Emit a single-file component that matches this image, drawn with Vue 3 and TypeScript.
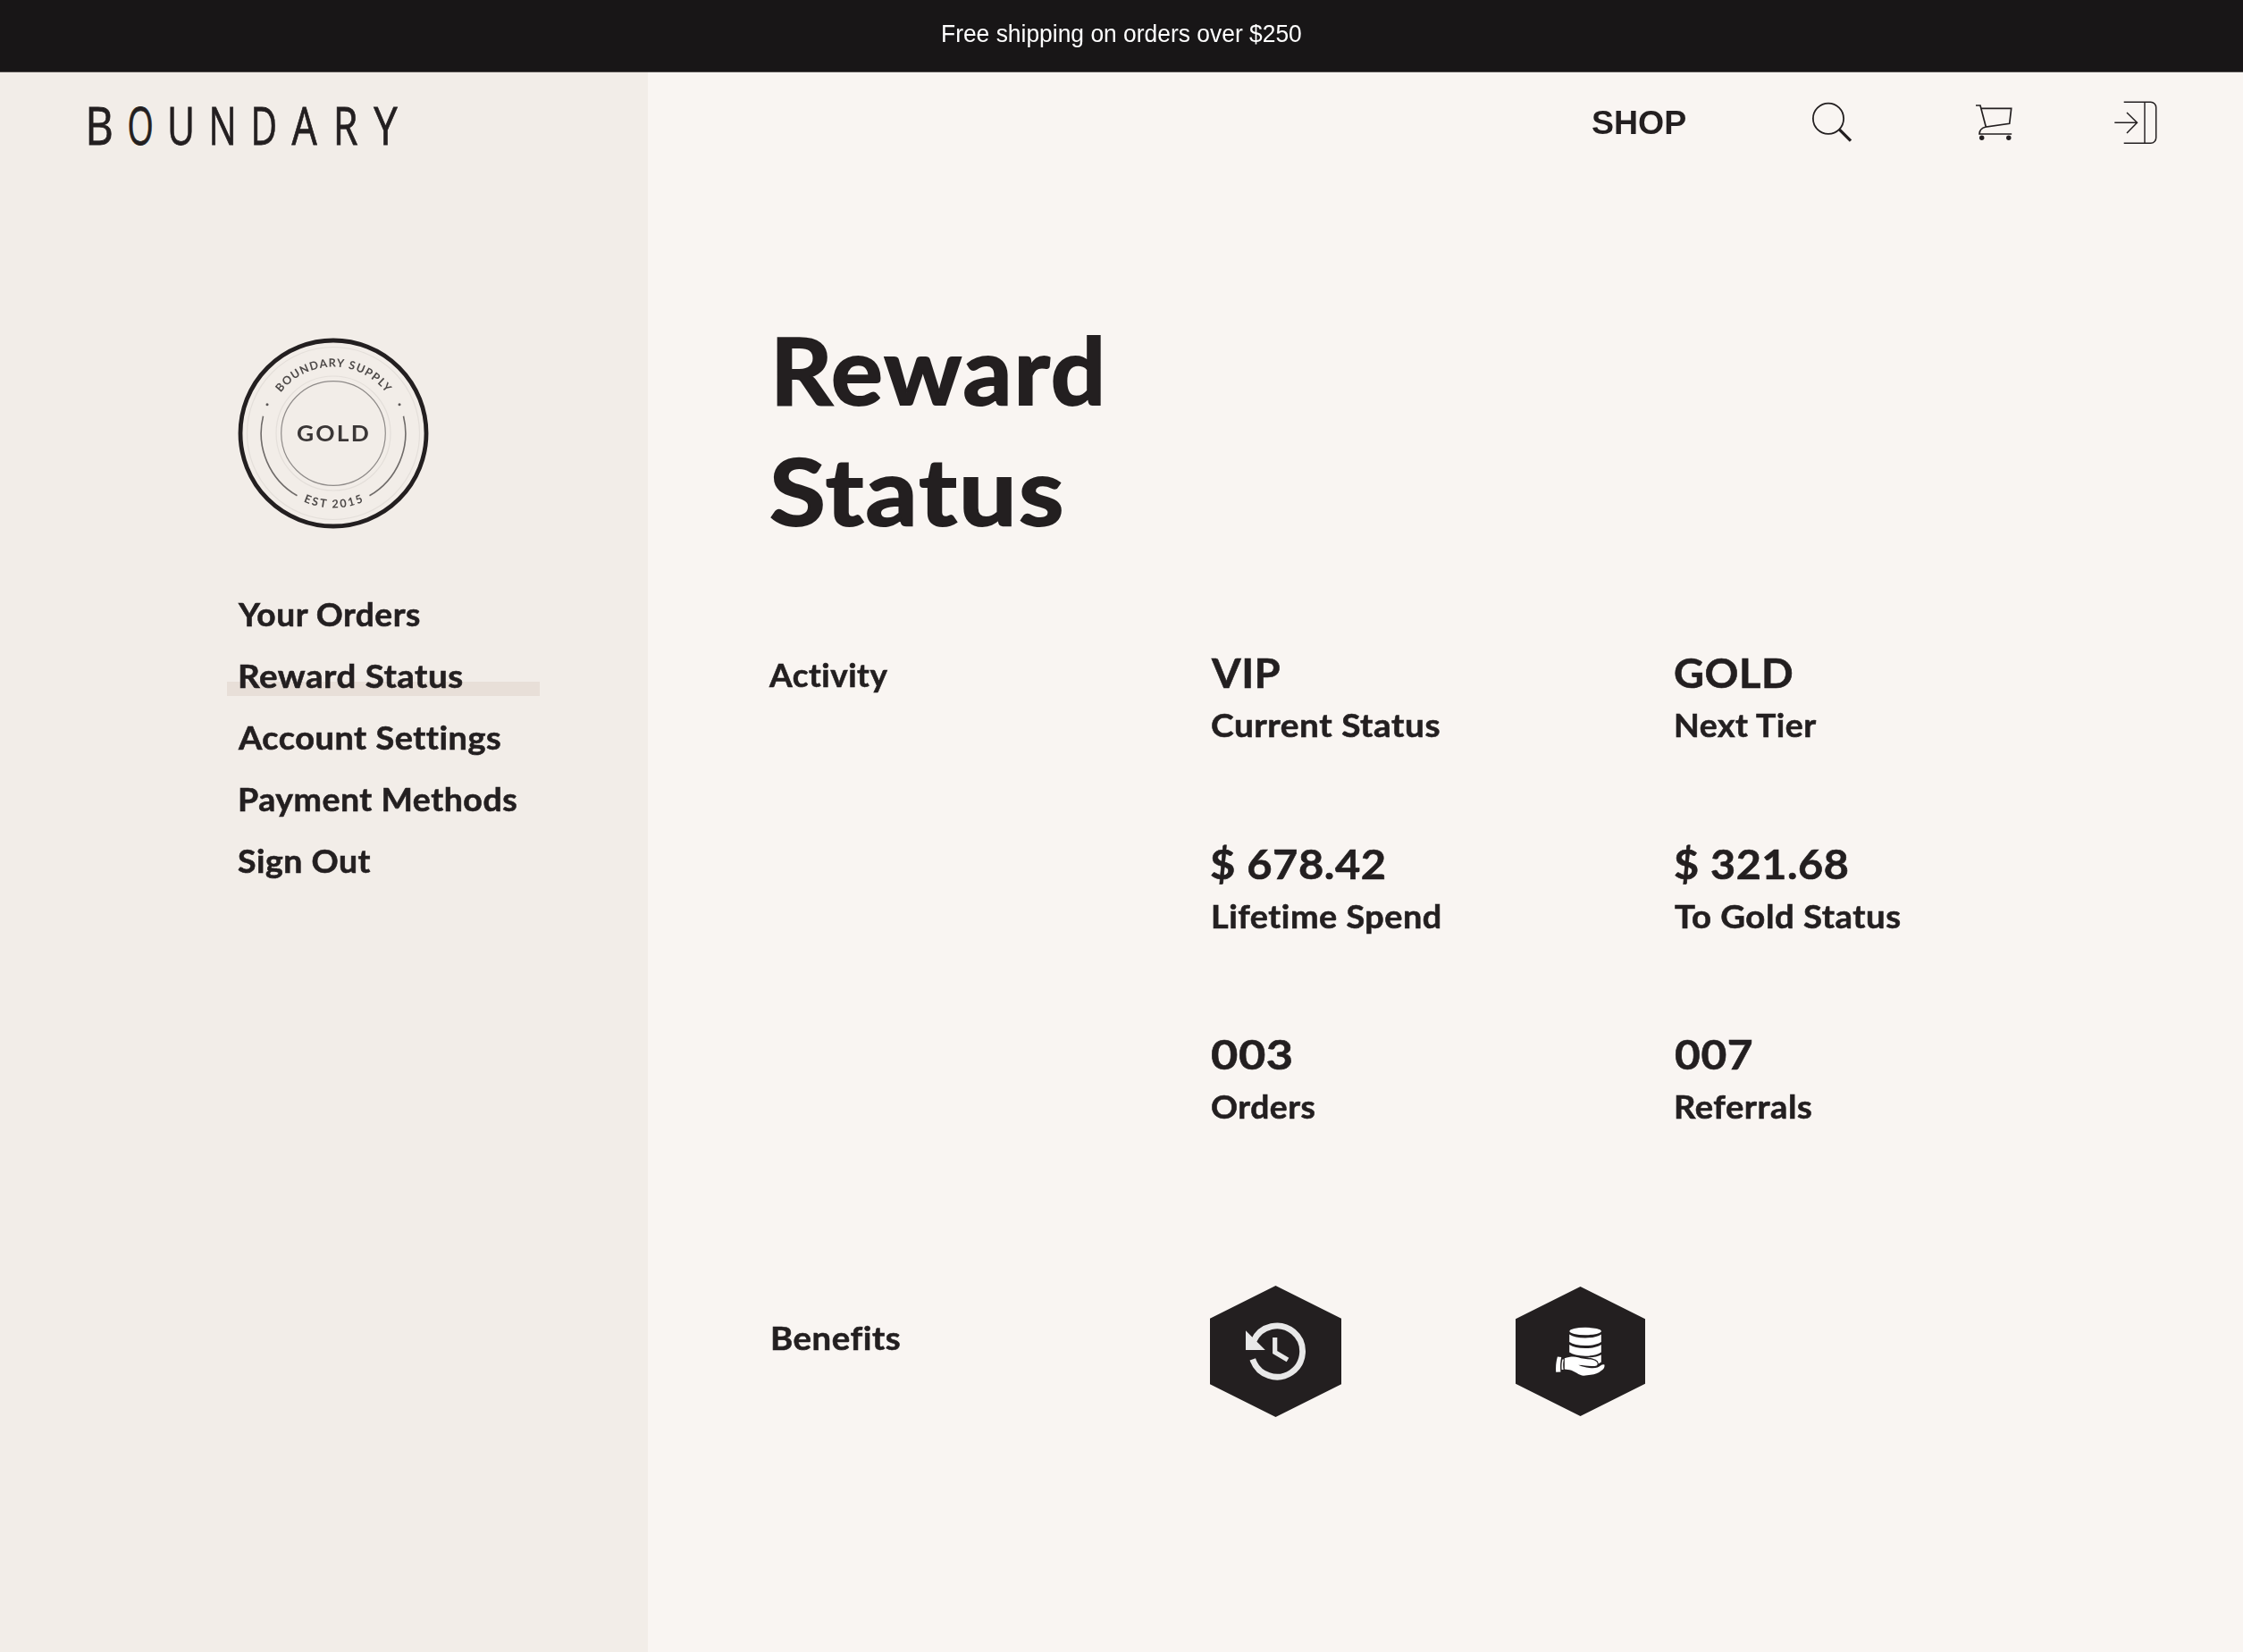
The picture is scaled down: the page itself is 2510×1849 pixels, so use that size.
<script setup lang="ts">
import type { Directive } from 'vue'

interface Label {
  text: string
  /** distance from the column edge to the first glyph's ink */
  x: number
  /** ink width of the whole line */
  w: number
}
interface Stat {
  value: Label
  label: Label
}

/** Ink extents of a text in the element's own font, taken large for precision. */
function measure(el: HTMLElement, text: string): { left: number; ink: number } | null {
  const ctx = document.createElement('canvas').getContext('2d')
  if (!ctx) return null
  const cs = getComputedStyle(el)
  const zoom = 8
  const spacing = parseFloat(cs.letterSpacing) || 0
  ctx.font = `${cs.fontWeight} ${parseFloat(cs.fontSize) * zoom}px ${cs.fontFamily}`
  ctx.letterSpacing = `${spacing * zoom}px`
  const m = ctx.measureText(text)
  return {
    left: m.actualBoundingBoxLeft / zoom,
    ink: (m.actualBoundingBoxLeft + m.actualBoundingBoxRight) / zoom,
  }
}

/** Extends a line of text so that its ink starts at x and is w pixels wide. */
const vTrack: Directive<HTMLElement, Label> = {
  mounted(el, { value }) {
    const m = measure(el, value.text)
    if (!m) return
    const k = value.w / m.ink
    el.style.marginLeft = `${value.x + m.left * k}px`
    el.style.transform = `scaleX(${k})`
  },
}

const banner: Label = { text: 'Free shipping on orders over $250', x: 1055, w: 400.7 }
const shop: Label = { text: 'SHOP', x: 0, w: 104.7 }

const menu: (Label & { active?: boolean })[] = [
  { text: 'Your Orders', x: 12.9, w: 204 },
  { text: 'Reward Status', x: 15.4, w: 248.4, active: true },
  { text: 'Account Settings', x: 12.9, w: 293.6 },
  { text: 'Payment Methods', x: 15.4, w: 309.1 },
  { text: 'Sign Out', x: 12.9, w: 148 },
]

const title: Label[] = [
  { text: 'Reward', x: 10, w: 361 },
  { text: 'Status', x: 2.6, w: 325.6 },
]

const activity: Label = { text: 'Activity', x: 0, w: 132.6 }
const benefits: Label = { text: 'Benefits', x: 5.2, w: 142 }

const stats: Stat[] = [
  { value: { text: 'VIP', x: 0.3, w: 77 }, label: { text: 'Current Status', x: 0.7, w: 254.6 } },
  { value: { text: 'GOLD', x: 0.3, w: 131 }, label: { text: 'Next Tier', x: 2.4, w: 157.4 } },
  { value: { text: '$ 678.42', x: 0.7, w: 194 }, label: { text: 'Lifetime Spend', x: 2.7, w: 253.3 } },
  { value: { text: '$ 321.68', x: 0.5, w: 192.8 }, label: { text: 'To Gold Status', x: 0, w: 252.3 } },
  { value: { text: '003', x: 0.8, w: 89.6 }, label: { text: 'Orders', x: 0.7, w: 115 } },
  { value: { text: '007', x: 0.7, w: 85.2 }, label: { text: 'Referrals', x: 2.2, w: 151 } },
]

interface LogoLetter {
  c: string
  x: number
  w: number
}
const logoLetters: LogoLetter[] = [
  { c: 'B', x: 99.8, w: 24.5 },
  { c: 'O', x: 144.3, w: 25.3 },
  { c: 'U', x: 190.4, w: 24 },
  { c: 'N', x: 237.3, w: 23.4 },
  { c: 'D', x: 284.3, w: 23.6 },
  { c: 'A', x: 326.5, w: 28.6 },
  { c: 'R', x: 377, w: 23.2 },
  { c: 'Y', x: 418.2, w: 26.6 },
]

/** Condenses a logo letter horizontally to its own ink width. */
const vCondense: Directive<HTMLElement, LogoLetter> = {
  mounted(el, { value }) {
    const m = measure(el, value.c)
    if (!m) return
    const k = value.w / m.ink
    el.setAttribute('transform', `translate(${value.x + m.left * k} 68.5) scale(${k} 1)`)
  },
}
</script>

<template>
  <div class="page">
    <div class="banner"><span v-track="banner" class="banner-text">{{ banner.text }}</span></div>

    <div class="body">
      <aside class="sidebar">
        <svg class="logo" width="460" height="94" role="img" aria-label="Boundary">
          <text v-for="l in logoLetters" :key="l.c" v-condense="l">{{ l.c }}</text>
        </svg>

        <svg class="badge" width="216" height="216" viewBox="-108 -108 216 216">
          <defs>
            <path id="arc-top" d="M-74.5 0A74.5 74.5 0 0 1 74.5 0" />
            <path id="arc-bottom" d="M-83.5 0A83.5 83.5 0 0 0 83.5 0" />
          </defs>
          <circle r="104" class="ring" />
          <circle r="96.5" class="faint" />
          <circle r="64" class="faint" />
          <circle r="58.3" class="inner" />
          <path class="side" d="M-78.5 -19.3A80.8 80.8 0 0 0 -40.5 69.8M78.5 -19.3A80.8 80.8 0 0 1 40.5 69.8" />
          <circle cx="-74" cy="-32.3" r="1.5" class="dot" />
          <circle cx="74" cy="-32.3" r="1.5" class="dot" />
          <text class="small"><textPath href="#arc-top" startOffset="50%" text-anchor="middle" textLength="136">BOUNDARY SUPPLY</textPath></text>
          <text class="small"><textPath href="#arc-bottom" startOffset="50%" text-anchor="middle" textLength="69">EST 2015</textPath></text>
          <text class="gold" x="-41" y="8.6" textLength="83" lengthAdjust="spacingAndGlyphs">GOLD</text>
        </svg>

        <nav class="menu">
          <a v-for="m in menu" :key="m.text" :class="{ active: m.active }">
            <span v-track="m">{{ m.text }}</span>
          </a>
        </nav>
      </aside>

      <main class="main">
        <header class="top">
          <a v-track="shop" class="shop">{{ shop.text }}</a>
          <svg class="search" width="46" height="46">
            <circle cx="19" cy="18.7" r="17.1" stroke-width="1.8" />
            <path d="M31 30.6L44 43.6" stroke-width="3.4" />
          </svg>
          <svg class="cart" width="44" height="44">
            <path d="M1 3H6L12.3 27L38.7 23.3L40.7 6.3H7M12.3 27C8 28 5 31 5 35H41.2" stroke-width="1.7" />
            <circle cx="7.7" cy="39.3" r="2.7" class="wheel" />
            <circle cx="37.8" cy="39.3" r="2.7" class="wheel" />
          </svg>
          <svg class="login" width="50" height="50">
            <path d="M11.7 2.3H41.7A6 6 0 0 1 47.7 8.3V42.3A6 6 0 0 1 41.7 48.3H11.7" stroke-width="1.5" />
            <path d="M35 2.3V48.3" stroke-width="1.7" stroke-opacity="0.85" />
            <path d="M1.3 25.3H26.5M15 14L26.5 25.3L15 37" stroke-width="1.5" />
          </svg>
        </header>

        <h1 class="title">
          <span v-for="t in title" :key="t.text" v-track="t">{{ t.text }}</span>
        </h1>

        <section class="row activity">
          <h2 class="row-label"><span v-track="activity">{{ activity.text }}</span></h2>
          <div class="stats">
            <div v-for="s in stats" :key="s.label.text" class="stat">
              <div class="value" v-track="s.value">{{ s.value.text }}</div>
              <div class="label" v-track="s.label">{{ s.label.text }}</div>
            </div>
          </div>
        </section>

        <section class="row benefits">
          <h2 class="row-label"><span v-track="benefits">{{ benefits.text }}</span></h2>
          <div class="hexes">
            <svg width="147" height="147">
              <path class="hex" d="M73.5 0L147 36.7V110.3L73.5 147L0 110.3V36.7Z" />
              <path d="M48.9 61.8A28.6 28.6 0 1 1 47.8 82.4" fill="none" stroke="#e8e8e8" stroke-width="6.8" />
              <path d="M40 50.3V71.9H61.8Z" fill="#e8e8e8" />
              <path d="M72.7 58V74.6L87 83" fill="none" stroke="#e8e8e8" stroke-width="5.2" />
            </svg>
            <svg width="145" height="145">
              <path class="hex" d="M72.5 0L145 36.2V108.8L72.5 145L0 108.8V36.2Z" />
              <g fill="#fff">
                <ellipse cx="78.1" cy="50" rx="17.8" ry="4.2" />
                <path d="M60.2 53.4Q66 57.4 78 57.4T95.8 53.4V62Q90 66 78 66T60.2 62Z" />
                <path d="M60.2 65Q66 69 78 69T95.8 65V73.6Q90 77.7 78 77.7T60.2 73.6Z" />
                <path d="M78 79.4Q90 79.8 95.8 76.3V84.6L92.6 86.6C93.4 82 86 80 78 79.4Z" />
                <path d="M54.8 80.2C60 78.6 65 78 70 79.2C75 81 82 81 86.5 82C91 83.2 92.6 86 91.2 88C89.5 90.2 82 88.6 70.3 87.8C74 89.5 78 90.6 82.5 91C89 91.8 93 90.6 95 88.6C96.5 87.4 98.5 87 99.4 87.6C100 90 98.5 92.5 96 94C92.5 97 89 98.2 84 98.8L76.2 99.8C71 99.5 66 94.5 60.5 93.3L54.8 92.6Z" />
                <path d="M46.9 78.6L51.2 79C50 84 49.8 90 50.4 95.6L45.2 95.8C44.8 90 45.2 84 46.9 78.6Z" />
                <path d="M52.4 81.5L53.9 81.5C53 85 53 89 53.6 93L51.6 93C51.3 89 51.5 85 52.4 81.5Z" />
              </g>
            </svg>
          </div>
        </section>
      </main>
    </div>
  </div>
</template>

<style>
body {
  margin: 0;
  background: #f9f5f2;
}
</style>

<style scoped>
.page {
  width: 2510px;
  height: 1849px;
  overflow: hidden;
  display: flex;
  flex-direction: column;
  background: #f9f5f2;
  color: #231f20;
  font-family: Lato, sans-serif;
  font-weight: 700;
}
.banner {
  height: 80px;
  flex: none;
  border-bottom: 1px solid #524e4d;
  background: #181617;
  color: #fff;
  display: flex;
}
.banner-text {
  font: 400 26.8px/76px 'Liberation Sans', sans-serif;
  white-space: nowrap;
  transform-origin: left;
}
.body {
  flex: 1;
  display: flex;
}
.sidebar {
  width: 725px;
  flex: none;
  background: #f2ede8;
}
.logo {
  display: block;
  margin-top: 12px;
  font: 500 58.5px 'Open Sans', sans-serif;
  fill: #231f20;
  stroke: #231f20;
  stroke-width: 0.8px;
}
.badge {
  display: block;
  margin: 190px 0 0 264.5px;
  filter: blur(0.45px);
}
.badge circle,
.badge path {
  fill: none;
}
.badge .ring {
  stroke: #231f20;
  stroke-width: 4.8;
}
.badge .faint {
  stroke: #e4dfda;
  stroke-width: 1.2;
}
.badge .inner {
  stroke: #8f8b89;
  stroke-width: 1.2;
}
.badge .side {
  stroke: #6f6b69;
  stroke-width: 1.6;
}
.badge circle.dot {
  fill: #5a5655;
}
.badge .small {
  font: 700 12.6px Lato, sans-serif;
  fill: #4d4948;
}
.badge .gold {
  font: 700 24px Lato, sans-serif;
  letter-spacing: 2px;
  fill: #3a3636;
}
.menu {
  margin: 65.5px 0 0 254px;
  width: 349.5px;
}
.menu a {
  display: block;
  height: 69.2px;
  font-size: 36px;
  line-height: 56px;
  letter-spacing: 0.5px;
  white-space: nowrap;
  -webkit-text-stroke: 0.6px #231f20;
}
.menu span,
.row-label span {
  display: block;
  width: max-content;
  transform-origin: left;
}
.menu .active {
  background: linear-gradient(#e8dfd8, #e8dfd8) 0 35px / 100% 16px no-repeat;
}
.main {
  flex: 1;
  box-sizing: border-box;
  padding-left: 135px;
}
.top {
  height: 112px;
  padding-right: 95px;
  display: flex;
  align-items: center;
  justify-content: flex-end;
}
.top svg {
  fill: none;
  stroke: #231f20;
}
.top .wheel {
  fill: #231f20;
  stroke: none;
}
.shop {
  font: 700 37.3px 'Liberation Sans', sans-serif;
  margin-right: 140px;
  transform-origin: left;
}
.search {
  margin-right: 137px;
}
.cart {
  margin-right: 111px;
}
.title {
  margin: 153px 0 0;
  font-size: 102.5px;
  line-height: 135px;
  font-weight: 700;
  letter-spacing: 2px;
  -webkit-text-stroke: 2px #231f20;
}
.title span {
  display: block;
  width: max-content;
  transform-origin: left;
}
.row {
  display: flex;
}
.row-label {
  margin: 0;
  font-size: 36px;
  line-height: 56px;
  font-weight: 700;
  letter-spacing: 0.5px;
  flex: none;
  -webkit-text-stroke: 0.6px #231f20;
}
.activity {
  margin-top: 108px;
}
.activity .row-label {
  width: 495px;
  padding-top: 3px;
}
.stats {
  display: grid;
  grid-template-columns: 519px 519px;
  row-gap: 98.6px;
}
.stat {
  height: 115px;
  letter-spacing: 0.5px;
  white-space: nowrap;
  -webkit-text-stroke: 0.6px #231f20;
}
.value,
.label {
  width: max-content;
  transform-origin: left;
}
.value {
  padding-top: 1px;
  font-size: 45px;
  line-height: 56px;
}
.label {
  margin-top: 2px;
  font-size: 36px;
  line-height: 56px;
}
.benefits {
  margin-top: 172.5px;
}
.benefits .row-label {
  width: 494px;
  padding-top: 30px;
}
.hexes {
  display: flex;
  align-items: center;
  gap: 194.5px;
}
.hexes svg {
  display: block;
}
.hex {
  fill: #231f20;
}
</style>
